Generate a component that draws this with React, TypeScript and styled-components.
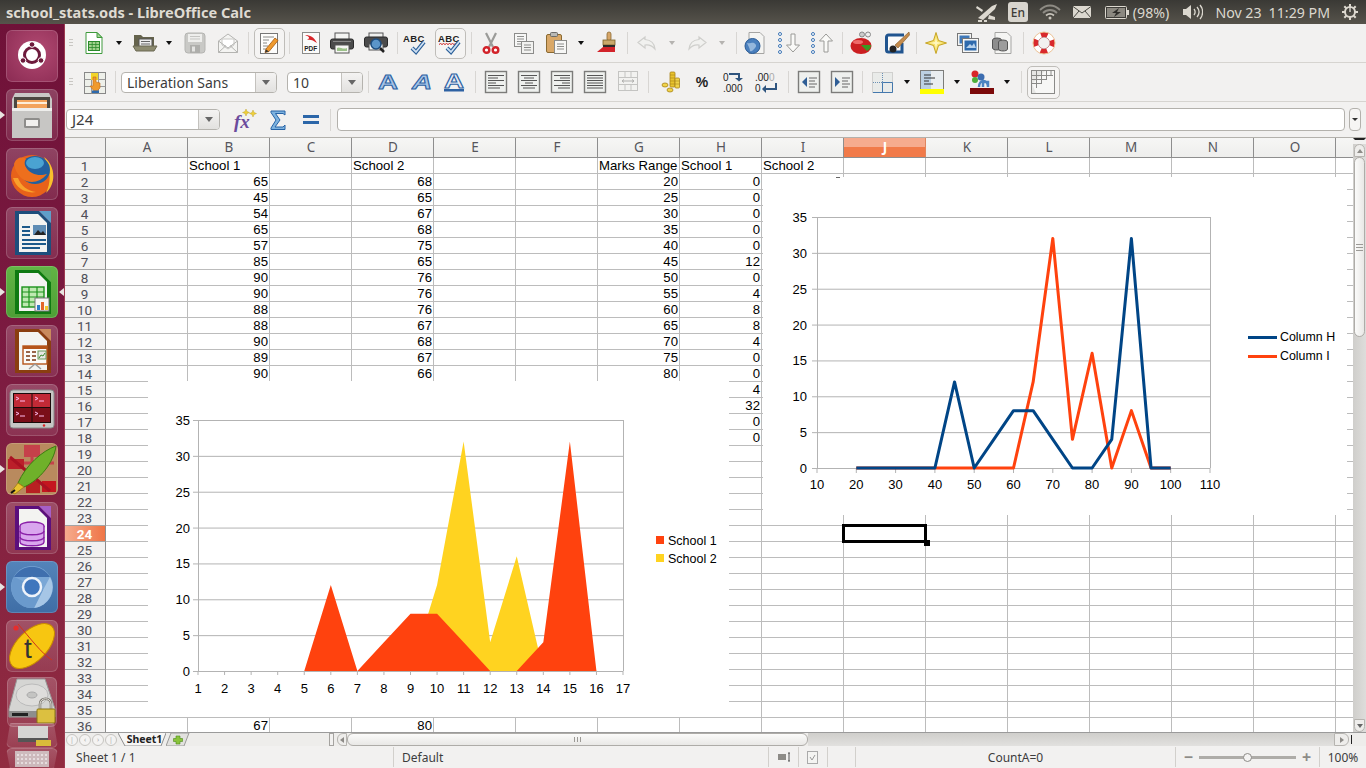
import React, { ReactNode } from "react";
import styled, { createGlobalStyle } from "styled-components";

const Global = createGlobalStyle`
  html, body { margin: 0; padding: 0; background: #f2f1f0; }
  * { box-sizing: border-box; }
`;

const UI = `"Noto Sans", "Open Sans", sans-serif`;
const CELL = `"Liberation Sans", Arial, sans-serif`;

const Page = styled.div`
  width: 1366px; height: 768px; overflow: hidden;
  display: flex; flex-direction: column; font-family: ${UI};
`;
const TopBar = styled.header`
  height: 24px; flex: none; display: flex; align-items: center;
  background: linear-gradient(#3a3935, #56534b); color: #dfdbd2;
`;
const Title = styled.div`
  font-weight: 700; font-size: 14.6px; margin-left: 6px; flex: 1; white-space: nowrap;
`;
const Tray = styled.div<{ $ml: number }>`
  margin-left: ${(p) => p.$ml}px; flex: none; display: flex; align-items: center;
  font-size: 14.2px; color: #dcd8cf; white-space: nowrap;
`;
const EnBox = styled.div`
  width: 20px; height: 20px; border-radius: 3px; background: #d8d5ce; color: #3c3b37;
  font-size: 12px; font-weight: 500; display: flex; align-items: center; justify-content: center;
`;
const Body = styled.div`
  flex: 1; min-height: 0; display: flex;
`;
const Launcher = styled.nav`
  width: 65px; flex: none; display: flex; flex-direction: column; align-items: center;
  padding: 6px 0 0 0; gap: 7px; overflow: hidden;
  background: linear-gradient(#6f1138, #7c1b41 45%, #912c40);
  border-right: 1px solid #9c3a50;
`;
const Tile = styled.div<{ $bg?: string; $h?: number; $w?: number; $mt?: number; $clip?: string }>`
  position: relative; flex: none; width: ${(p) => p.$w ?? 52}px; height: ${(p) => p.$h ?? 52}px;
  margin-top: ${(p) => p.$mt ?? 0}px;
  border-radius: 6px; display: flex; align-items: center; justify-content: center;
  background: ${(p) => p.$bg ?? "linear-gradient(rgba(255,255,255,.2), rgba(255,255,255,.09))"};
  box-shadow: inset 0 0 0 1px rgba(255,255,255,.16);
  ${(p) => (p.$clip ? `clip-path: ${p.$clip};` : "")}
`;
const Pip = styled.span<{ $side: "l" | "r" }>`
  position: absolute; top: 50%; margin-top: -4px; width: 0; height: 0;
  border-top: 4px solid transparent; border-bottom: 4px solid transparent;
  ${(p) =>
    p.$side === "l"
      ? "left: -6px; border-left: 5px solid #e8e4e0;"
      : "right: -6px; border-right: 5px solid #e8e4e0;"}
`;
const Main = styled.main`
  flex: 1; min-width: 0; display: flex; flex-direction: column; background: #f2f1f0;
`;
const Toolbar = styled.div<{ $h: number }>`
  height: ${(p) => p.$h}px; flex: none; display: flex; align-items: center;
  border-bottom: 1px solid #d6d4d0; background: #f2f1f0;
`;
const Slot = styled.div<{ $w: number; $ml: number; $on?: boolean }>`
  flex: none; width: ${(p) => p.$w}px; margin-left: ${(p) => p.$ml}px;
  display: flex; align-items: center; justify-content: center;
  ${(p) =>
    p.$on
      ? `height: ${p.$w}px; border: 1px solid #bfbdb9; border-radius: 5px; background: #f5f4f3;`
      : ""}
`;
const Sep = styled.div`
  width: 1px; height: 22px; background: #d8d6d3;
`;
const Grip = styled.div`
  width: 4px; height: 9px;
  background: repeating-linear-gradient(#c9c7c3 0 1px, transparent 1px 3px);
`;
const Arrow = styled.div`
  width: 0; height: 0; border-left: 3.5px solid transparent; border-right: 3.5px solid transparent;
  border-top: 4px solid #111;
`;
const ArrowOff = styled(Arrow)`
  border-top-color: #b5b3b0;
`;
const Combo = styled.div<{ $w: number; $h?: number }>`
  width: ${(p) => p.$w}px; height: ${(p) => p.$h ?? 21}px; flex: none; display: flex;
  background: #fff; border: 1px solid #b5b3ae; border-radius: 4px; overflow: hidden;
`;
const ComboText = styled.div<{ $size?: number }>`
  flex: 1; font-size: ${(p) => p.$size ?? 14}px; padding-left: 5px; color: #3c3c3c; line-height: 19px; white-space: nowrap;
`;
const ComboBtn = styled.div`
  width: 21px; flex: none; display: flex; align-items: center; justify-content: center;
  background: linear-gradient(#f4f3f2, #e2e1df); border-left: 1px solid #c4c2be;
`;
const GrayArrow = styled(Arrow)`
  border-left-width: 4px; border-right-width: 4px; border-top: 5px solid #666;
`;
const FormulaBar = styled.div`
  height: 35px; flex: none; display: flex; align-items: center; background: #f2f1f0;
`;
const FormulaInput = styled.div`
  width: 1008px; height: 23px; margin-left: 6px; flex: none; background: #fff;
  border: 1px solid #b3b1ac; border-radius: 4px;
`;
const FormulaDrop = styled.div`
  width: 12px; height: 23px; margin-left: 4px; flex: none; display: flex; align-items: center; justify-content: center;
  border: 1px solid #b3b1ac; border-radius: 4px; background: #f6f5f4;
`;
const SmallBlackArrow = styled(Arrow)`
  border-left-width: 3px; border-right-width: 3px; border-top-width: 3px; border-top-color: #333;
`;
const SheetArea = styled.div`
  flex: 1; min-height: 0; display: flex; border-top: 1px solid #b3b1ac;
`;
const Sheet = styled.div`
  flex: 1; min-width: 0; position: relative; overflow: hidden; background: #fff;
`;
const HeaderRow = styled.div`
  display: flex; height: 20px; border-bottom: 1px solid #8e8e8e;
  background: linear-gradient(#f6f6f5, #eeeeec);
`;
const Corner = styled.div`
  width: 41px; flex: none; border-right: 1px solid #8e8e8e; background: #f0efee;
`;
const ColHead = styled.div<{ $sel?: boolean; $w?: number }>`
  width: ${(p) => p.$w ?? 82}px; flex: none; text-align: center; font-size: 13.5px; line-height: 18px; padding-left: 1px;
  color: ${(p) => (p.$sel ? "#fff" : "#56565c")};
  font-weight: ${(p) => (p.$sel ? 700 : 400)};
  border-right: 1px solid ${(p) => (p.$sel ? "#e0855e" : "#8e8e8e")};
  ${(p) => (p.$sel ? "background: linear-gradient(#f6ab8e 0 50%, #f17a49 50%);" : "")}
  &:last-child { border-right: none; }
`;
const Row = styled.div`
  display: flex; height: 16px;
`;
const RowHead = styled.div<{ $sel?: boolean }>`
  width: 41px; flex: none; text-align: center; font-family: Roboto, sans-serif; font-size: 13.5px; line-height: 16px; padding-right: 1px;
  height: 16px;
  color: ${(p) => (p.$sel ? "#fff" : "#4f4f58")}; font-weight: ${(p) => (p.$sel ? 700 : 400)};
  background: ${(p) => (p.$sel ? "linear-gradient(90deg, #f6ab8e, #ef7546)" : "#f2f1f0")};
  border-right: 1px solid #8e8e8e; border-bottom: 1px solid #a4a4a4;
`;
const Cell = styled.div<{ $num?: boolean; $w?: number }>`
  width: ${(p) => p.$w ?? 82}px; flex: none; font-family: ${CELL}; font-size: 13.2px; line-height: 15px;
  color: #000; white-space: nowrap; overflow: visible;
  padding: 0 1px; text-align: ${(p) => (p.$num ? "right" : "left")};
  border-right: 1px solid #bcbcbc; border-bottom: 1px solid #bcbcbc;
  &:last-child { border-right: none; }
`;
const ChartBox = styled.div<{ $x: number; $y: number; $w: number; $h: number }>`
  position: absolute; left: ${(p) => p.$x}px; top: ${(p) => p.$y}px;
  width: ${(p) => p.$w}px; height: ${(p) => p.$h}px; background: #fff;
`;
const Selected = styled.div`
  position: absolute; left: 777px; top: 386px; width: 85px; height: 19px; border: 3px solid #000;
`;
const Handle = styled.div`
  position: absolute; right: -6px; bottom: -6px; width: 6px; height: 6px; background: #000;
`;
const VScroll = styled.div`
  width: 13px; flex: none; display: flex; flex-direction: column; align-items: center;
  background: linear-gradient(90deg, #cfcecb, #dedddb);
`;
const SplitDash = styled.div`
  width: 100%; height: 6px; background: #f2f1f0; border-top: 2px solid #222; border-left: 2px solid #f2f1f0; border-right: 2px solid #f2f1f0;
`;
const VBtn = styled.div<{ $down?: boolean }>`
  width: 11px; height: 13px; flex: none; display: flex; align-items: center; justify-content: center;
  background: #eeedeb; border: 1px solid #b6b4b0;
  border-radius: ${(p) => (p.$down ? "0 0 6px 6px" : "6px 6px 0 0")};
`;
const ThumbV = styled.div`
  width: 11px; height: 180px; flex: none; border: 1px solid #aeaca8; border-radius: 6px;
  background: linear-gradient(90deg, #fbfbfa, #e9e8e6);
  display: flex; align-items: center; justify-content: center;
`;
const GripV = styled.div`
  width: 7px; height: 7px; background: repeating-linear-gradient(#9c9a96 0 1px, transparent 1px 3px);
`;
const Spacer = styled.div`
  flex: 1;
`;
const TabBar = styled.div`
  height: 14px; flex: none; display: flex; align-items: center; background: #eeedeb; border-top: 1px solid #9b9b9b;
  position: relative;
`;
const NavBtn = styled.div`
  width: 12px; height: 12px; margin-left: 1px; border-radius: 50%; flex: none; border: 1px solid #c6c4c0; background: #f4f3f2;
  display: flex; align-items: center; justify-content: center; color: #aaa; font-size: 7px; line-height: 1;
`;
const TabShape = styled.div`
  position: relative; width: 48px; height: 13px; margin-left: 1px; flex: none;
`;
const TabLabel = styled.div`
  position: absolute; inset: 0 0 0 5px; text-align: center; font: 700 10.5px/12px ${UI}; color: #222;
`;
const Splitter = styled.div`
  width: 5px; height: 13px; margin-left: 139px; flex: none; border: 1px solid #a5a3a0; background: #f2f1f0;
`;
const HBtn = styled.div<{ $right?: boolean; $w: number; $ml?: number }>`
  width: ${(p) => p.$w}px; height: 13px; flex: none; display: flex; align-items: center; justify-content: center;
  margin-left: ${(p) => p.$ml ?? 0}px;
  background: #eeedeb; border: 1px solid #b6b4b0;
  border-radius: ${(p) => (p.$right ? "0 6px 6px 0" : "6px 0 0 6px")};
`;
const ThumbH = styled.div`
  width: 461px; height: 13px; flex: none; border: 1px solid #aeaca8; border-radius: 6px;
  background: linear-gradient(#fbfbfa, #e9e8e6); display: flex; align-items: center; justify-content: center;
`;
const GripH = styled.div`
  width: 7px; height: 5px; background: repeating-linear-gradient(90deg, #9c9a96 0 1px, transparent 1px 3px);
`;
const TrackH = styled.div`
  width: 526px; height: 13px; flex: none; background: linear-gradient(#cfcecb, #e2e1df);
`;
const EndTick = styled.div`
  width: 1px; height: 9px; margin-left: 2px; flex: none; background: #222;
`;
const TriL = styled.div`
  width: 0; height: 0; border-top: 3px solid transparent; border-bottom: 3px solid transparent; border-right: 4px solid #8d8b87;
`;
const TriR = styled(TriL)`
  border-right: none; border-left: 4px solid #8d8b87;
`;
const TriU = styled.div`
  width: 0; height: 0; border-left: 3px solid transparent; border-right: 3px solid transparent; border-bottom: 4px solid #8d8b87;
`;
const TriD = styled(TriU)`
  border-bottom: none; border-top: 4px solid #666;
`;
const StatusBar = styled.footer`
  height: 22px; flex: none; display: flex; align-items: center; background: #f2f1f0; color: #3c3c3c; font-size: 12px;
`;
const StatusCell = styled.div<{ $w: number; $center?: boolean; $first?: boolean }>`
  width: ${(p) => p.$w}px; height: 20px; flex: none; display: flex; align-items: center;
  justify-content: ${(p) => (p.$center ? "center" : "flex-start")};
  padding-left: ${(p) => (p.$center ? 0 : 8)}px;
  border-left: ${(p) => (p.$first ? "none" : "1px solid #d2d0cc")};
  gap: 3px;
`;
const ZoomTrack = styled.div`
  width: 97px; height: 3px; margin: 0 3px; background: #aeaca8; position: relative;
`;
const ZoomKnob = styled.div`
  position: absolute; left: 44px; top: -3px; width: 9px; height: 9px; border-radius: 50%; background: #f4f3f2; border: 1px solid #8d8b87;
`;
const ZoomSign = styled.span`
  font-size: 16px; color: #8d8b87; font-weight: 700; line-height: 1;
`;
const Svg = styled.svg`
  display: block; flex: none;
`;

/* ---------- icon helper ---------- */
const I = ({ w = 24, h = 24, children }: { w?: number; h?: number; children: ReactNode }) => (
  <Svg width={w} height={h} viewBox={`0 0 ${w} ${h}`}>
    {children}
  </Svg>
);

/* --- toolbar 1 --- */
const NewCalc = () => (
  <I>
    <path d="M4 1.5h11l5 5v16H4z" fill="#fff" stroke="#3f9a3c" />
    <path d="M15 1.5v5h5z" fill="#a8d79a" stroke="#3f9a3c" />
    <rect x="6.5" y="10.5" width="11" height="9" fill="#a4d38e" stroke="#2c8a2c" />
    <path d="M6.5 13.5h11M6.5 16.5h11M10.2 10.5v9M13.8 10.5v9" stroke="#2c8a2c" strokeWidth=".8" />
  </I>
);
const OpenIcon = () => (
  <I w={26}>
    <path d="M2 4h7l2 2h11v10H2z" fill="#65634c" />
    <rect x="7" y="8" width="13" height="8" fill="#eee" stroke="#555" />
    <path d="M9 10.500h9M9 13h9" stroke="#666" />
    <path d="M1 15h24l-3 5H4z" fill="#8d8b70" stroke="#6b6952" />
  </I>
);
const SaveIcon = () => (
  <I>
    <rect x="2" y="2" width="20" height="20" rx="3" fill="#c9c9c6" stroke="#b5b5b2" />
    <rect x="5" y="3" width="14" height="8" fill="#eeeeec" />
    <path d="M7 5.500h10M7 8h10" stroke="#c5c5c2" />
    <rect x="7" y="14" width="10" height="8" fill="#aeaeab" />
    <rect x="9" y="15.500" width="3" height="5" fill="#e4e4e2" />
  </I>
);
const MailOpen = () => (
  <I>
    <path d="M2.500 10 12 3l9.500 7v11.500h-19z" fill="#f4f4f2" stroke="#b4b4b1" />
    <path d="M6 8h12v6l-6 4-6-4z" fill="#fff" stroke="#c8c8c5" />
    <path d="M2.500 21.500 10 14.500M21.500 21.500 14 14.500M2.500 10 12 17l9.500-7" fill="none" stroke="#b4b4b1" />
  </I>
);
const EditDoc = () => (
  <I>
    <rect x="3.500" y="2.500" width="17" height="20" fill="#fdfdfc" stroke="#777" />
    <path d="M6 6h11M6 9h6M6 12h4M6 15h5M6 18h4" stroke="#8a8a88" />
    <path d="M9 18 18 7l3 2.500-9 11-4 1z" fill="#ef9a2e" stroke="#a8590c" strokeWidth=".8" />
    <path d="M8 21.500l1-3 3 2z" fill="#333" />
  </I>
);
const PdfIcon = () => (
  <I>
    <rect x="3.500" y="1.500" width="17" height="21" fill="#fbfbfa" stroke="#8b8b89" />
    <path d="M6 4c5 0 9 2 12 8-4-3-7-4-10-3 3-2 3-3-2-5z" fill="#d8252a" />
    <text x="5.200" y="20" fontFamily={CELL} fontSize="6.500" fontWeight="700" fill="#222">PDF</text>
  </I>
);
const PrintIcon = () => (
  <I w={26}>
    <rect x="6" y="2" width="14" height="8" fill="#f4f4f2" stroke="#555" />
    <rect x="1.500" y="8" width="23" height="10" rx="2" fill="#4b4b4b" stroke="#2a2a2a" />
    <path d="M4 10.500h18" stroke="#888" />
    <rect x="6" y="14" width="14" height="8" fill="#f6f6f4" stroke="#555" />
    <path d="M8 17c2-2 6 2 10 0v3H8z" fill="#9cc28a" />
  </I>
);
const PreviewIcon = () => (
  <I w={26}>
    <rect x="6" y="2" width="14" height="6" fill="#f0f0ee" stroke="#555" />
    <rect x="1.500" y="6" width="23" height="10" rx="2" fill="#4b4b4b" stroke="#2a2a2a" />
    <rect x="6" y="13" width="14" height="6" fill="#f6f6f4" stroke="#555" />
    <circle cx="13" cy="13" r="5" fill="#5b95c9" stroke="#1e4e80" strokeWidth="1.500" />
    <path d="M17 17l4 4" stroke="#222" strokeWidth="2.500" />
  </I>
);
const CheckMark = () => (
  <>
    <path d="M9 17l4 4 8-10" fill="none" stroke="#2a5f99" strokeWidth="4" />
    <path d="M9 17l4 4 8-10" fill="none" stroke="#cfe0f2" strokeWidth="1.800" />
  </>
);
const Spell = ({ wavy }: { wavy?: boolean }) => (
  <I w={24}>
    <text x="0" y="11" fontFamily={CELL} fontSize="9.500" fontWeight="700" letterSpacing=".4" fill="#222">ABC</text>
    {wavy && <path d="M1 13.500l1.500-1 1.500 1 1.500-1 1.500 1 1.500-1 1.500 1 1.500-1 1.500 1 1.500-1 1.500 1 1.500-1" fill="none" stroke="#c22" />}
    <CheckMark />
  </I>
);
const CutIcon = () => (
  <I>
    <path d="M7 2l7 14M17 2l-7 14" stroke="#9b9b98" strokeWidth="2.200" />
    <circle cx="7.500" cy="19" r="2.800" fill="#fff" stroke="#d2232a" strokeWidth="2.400" />
    <circle cx="16.500" cy="19" r="2.800" fill="#fff" stroke="#d2232a" strokeWidth="2.400" />
  </I>
);
const CopyIcon = () => (
  <I>
    <rect x="2.500" y="2.500" width="12" height="13" fill="#f7f7f6" stroke="#8c8c8a" />
    <path d="M5 5.500h7M5 8h7M5 10.500h7M5 13h5" stroke="#8c8c8a" />
    <rect x="9.500" y="10.500" width="12" height="12" fill="#f2f2f0" stroke="#8c8c8a" />
    <path d="M12 14h7M12 16.500h7M12 19h7" stroke="#8c8c8a" />
  </I>
);
const PasteIcon = () => (
  <I>
    <rect x="2.500" y="3.500" width="15" height="18" rx="1.500" fill="#d9a868" stroke="#8a6a32" />
    <rect x="6.500" y="1.500" width="7" height="4" rx="1" fill="#b9b9b6" stroke="#6c6c6a" />
    <rect x="10.500" y="9.500" width="12" height="13" fill="#f7f7f6" stroke="#8c8c8a" />
    <path d="M13 13h7M13 15.500h7M13 18h7" stroke="#8c8c8a" />
  </I>
);
const CloneBrush = () => (
  <I>
    <rect x="12" y="1" width="4" height="9" rx="2" fill="#d7a668" stroke="#8a6a32" strokeWidth=".8" />
    <rect x="8" y="9" width="12" height="5" fill="#c9a86b" stroke="#7c6028" strokeWidth=".8" />
    <path d="M8 14h12v4H8z" fill="#2a2a2a" />
    <path d="M8 16h12v5H2z" fill="#d2232a" />
  </I>
);
const UndoIcon = ({ flip }: { flip?: boolean }) => (
  <I w={22} h={20}>
    <g transform={flip ? "translate(22 0) scale(-1 1)" : undefined}>
      <path d="M9 4 2 9.500 9 15v-3c4-.500 7 .500 10 4-.500-5-4-9-10-9.500z" fill="#f1f1ef" stroke="#cfcfcc" strokeWidth="1.200" />
    </g>
  </I>
);
const HyperIcon = () => (
  <I>
    <path d="M6 1.500h11l4 4v17H6z" fill="#f5f5f3" stroke="#a5a5a3" />
    <circle cx="9.500" cy="15" r="7.500" fill="#4a7fbd" stroke="#2a5b95" />
    <path d="M4 12c3 1 5-1 7 0s3 3 1 5-3 4-5 3c0-3-2-5-3-8z" fill="#a7c5e3" opacity=".8" />
  </I>
);
const Dots = () => (
  <>
    <circle cx="3" cy="3" r="1.500" fill="#fff" stroke="#3d76b6" />
    <circle cx="3" cy="9" r="1.500" fill="#fff" stroke="#3d76b6" />
    <circle cx="3" cy="15" r="1.500" fill="#fff" stroke="#3d76b6" />
    <circle cx="3" cy="21" r="1.500" fill="#fff" stroke="#3d76b6" />
  </>
);
const SortIcon = ({ up }: { up?: boolean }) => (
  <I>
    <Dots />
    <path
      d={up ? "M16 3l6.500 7h-4.500v11h-4V10h-4.500z" : "M14 3h4v11h4.500L16 21l-6.500-7H14z"}
      fill="#fafaf8"
      stroke="#9a9a97"
    />
  </I>
);
const ChartIcon = () => (
  <I w={26}>
    <circle cx="19" cy="3.500" r="2.500" fill="#eee" stroke="#888" />
    <circle cx="13" cy="3.500" r="2.500" fill="#ccc" stroke="#888" />
    <ellipse cx="12" cy="15" rx="10.500" ry="8" fill="#cc1f22" />
    <path d="M12 14l10 0c0 3-2 5-4 6z" fill="#3a9a22" />
    <ellipse cx="9" cy="11" rx="5" ry="2" fill="#ef6a6a" />
  </I>
);
const DrawIcon = () => (
  <I w={26}>
    <path d="M20 4H4.500a2 2 0 0 0-2 2v13a2 2 0 0 0 2 2H18v-9" fill="#fbfbfa" stroke="#21558f" strokeWidth="3" />
    <path d="M25 1 11 14l3 3L25.500 4z" fill="#c68c4c" stroke="#7d5524" strokeWidth=".6" />
    <circle cx="9" cy="18" r="3.500" fill="#222" />
  </I>
);
const NavStar = () => (
  <I>
    <path d="M12 1.500 14.500 9.500 22.500 12 14.500 14.500 12 22.500 9.500 14.500 1.500 12 9.500 9.500z" fill="#f7e16b" stroke="#c6a423" />
    <path d="M12 6l1 5 5 1-5 1-1 5-1-5-5-1 5-1z" fill="#fff8c0" />
  </I>
);
const GalleryIcon = () => (
  <I>
    <rect x="1.500" y="2.500" width="14" height="12" fill="#f4f4f2" stroke="#777" />
    <rect x="3.500" y="4.500" width="10" height="8" fill="#3f78b8" />
    <rect x="6.500" y="7.500" width="16" height="14" fill="#f8f8f6" stroke="#777" />
    <rect x="8.500" y="9.500" width="12" height="10" fill="#2e6aad" />
    <path d="M10 17l4-4 2 2 2-3 2 5z" fill="#b6d1ec" />
  </I>
);
const DataIcon = () => (
  <I>
    <path d="M5 1.500h12l4 4v17H5z" fill="#f5f5f3" stroke="#a5a5a3" />
    <ellipse cx="7" cy="9" rx="4.500" ry="2" fill="#888" stroke="#555" />
    <path d="M2.500 9v8c0 2.600 9 2.600 9 0V9" fill="#8d8d8d" stroke="#555" />
    <ellipse cx="13" cy="11" rx="4.500" ry="2" fill="#999" stroke="#555" />
    <path d="M8.500 11v7c0 2.600 9 2.600 9 0v-7" fill="#9c9c9c" stroke="#555" />
  </I>
);
const HelpIcon = () => (
  <I w={24}>
    <circle cx="12" cy="12" r="8.500" fill="none" stroke="#fff" strokeWidth="5" />
    <circle cx="12" cy="12" r="8.500" fill="none" stroke="#d9292c" strokeWidth="5" strokeDasharray="6.700 6.650" strokeDashoffset="3.300" />
    <circle cx="12" cy="12" r="11" fill="none" stroke="#ecc295" strokeWidth="1" />
    <circle cx="12" cy="12" r="5.800" fill="#f2f1f0" stroke="#a55" strokeWidth=".6" />
  </I>
);

/* --- toolbar 2 --- */
const ThemesIcon = () => (
  <I>
    <rect x="1.500" y="2.500" width="21" height="21" fill="#eef0ea" stroke="#888" />
    <path d="M8.500 2.500v21M15.500 2.500v21M1.500 9.500h21M1.500 16.500h21" stroke="#999" />
    <rect x="8" y="3" width="7" height="7" fill="#f2d52a" />
    <path d="M10 7h3v5l4 1v5l-3 3h-3l-4-5 3 0z" fill="#f09a2e" stroke="#c4681a" strokeWidth=".6" />
    <rect x="9" y="20.500" width="7" height="2.500" fill="#2e6aad" />
  </I>
);
const LetterA = ({ italic, under }: { italic?: boolean; under?: boolean }) => (
  <I w={22} h={24}>
    <text
      x="1" y={under ? 17.500 : 19} fontFamily={CELL} fontSize="20" fontWeight="700" textLength={20} lengthAdjust="spacingAndGlyphs"
      fontStyle={italic ? "italic" : "normal"} fill={under ? "#e6edf6" : "#a6c4e6"} stroke="#2e62a3" strokeWidth=".9"
    >A</text>
    {under && <rect x="1" y="19" width="20" height="2.500" fill="#2e62a3" />}
  </I>
);
const Align = ({ lines }: { lines: [number, number][] }) => (
  <I>
    <rect x="1.500" y="1.500" width="21" height="21" fill="#eef0ee" stroke="#7c7c7a" strokeWidth="1.400" />
    {lines.map(([x, w], i) => (
      <rect key={i} x={x} y={5 + i * 2.5} width={w} height="1" fill="#555" />
    ))}
  </I>
);
const L = [[4, 16], [4, 10], [4, 16], [4, 8], [4, 16], [4, 12]] as [number, number][];
const C = [[4, 16], [7, 10], [4, 16], [8, 8], [4, 16], [6, 12]] as [number, number][];
const R = [[4, 16], [10, 10], [4, 16], [12, 8], [4, 16], [8, 12]] as [number, number][];
const J = [[4, 16], [4, 16], [4, 16], [4, 16], [4, 16], [4, 16]] as [number, number][];
const MergeIcon = () => (
  <I>
    <rect x="2.500" y="1.500" width="19" height="19" fill="#f2f2f0" stroke="#c4c4c2" />
    <path d="M2.500 7.500h19M2.500 14.500h19M9 1.500v6M15 1.500v6M9 14.500v6M15 14.500v6" stroke="#c4c4c2" />
    <path d="M6 11h12M6 11l2-1.500M6 11l2 1.500M18 11l-2-1.500M18 11l-2 1.500" stroke="#b0b0ae" fill="none" />
  </I>
);
const CoinsIcon = () => (
  <I>
    <rect x="13" y="2" width="5" height="15" rx="1" fill="#e9c42e" stroke="#a8841a" strokeWidth=".8" />
    <rect x="18" y="8" width="4.500" height="10" rx="1" fill="#f0d34a" stroke="#a8841a" strokeWidth=".8" />
    <path d="M13 5h5M13 8h5M13 11h5M13 14h5M18 11h4.500M18 14h4.500" stroke="#a8841a" strokeWidth=".6" />
    <ellipse cx="8" cy="15" rx="3" ry="2" fill="#f0d34a" stroke="#a8841a" strokeWidth=".8" />
    <ellipse cx="13" cy="20" rx="3" ry="2" fill="#f0d34a" stroke="#a8841a" strokeWidth=".8" />
  </I>
);
const PercentLabel = () => (
  <I>
    <text x="12" y="17" textAnchor="middle" fontFamily={CELL} fontSize="14" fontWeight="700" fill="#1e1e1e">%</text>
  </I>
);
const DecAdd = () => (
  <I w={26}>
    <text x="1" y="11" fontFamily={CELL} fontSize="10" fill="#222">0</text>
    <text x="1" y="22" fontFamily={CELL} fontSize="10" fill="#222">.000</text>
    <path d="M7 4h10v5" fill="none" stroke="#2f557f" strokeWidth="2" />
    <path d="M13 8h8l-4 3.500z" fill="#2f557f" />
  </I>
);
const DecDel = () => (
  <I w={26}>
    <text x="1" y="11" fontFamily={CELL} fontSize="10" fill="#222">.00<tspan fill="#aaa">0</tspan></text>
    <text x="1" y="22" fontFamily={CELL} fontSize="10" fill="#222">0</text>
    <path d="M22 13v6H10" fill="none" stroke="#2f557f" strokeWidth="2" />
    <path d="M12 15v8l-4-4z" fill="#2f557f" />
  </I>
);
const Indent = ({ more }: { more?: boolean }) => (
  <I>
    <rect x="1.500" y="1.500" width="21" height="21" fill="#eef0ee" stroke="#7c7c7a" strokeWidth="1.400" />
    {more ? <path d="M5 7v10l5-5z" fill="#2e5e96" /> : <path d="M10 7v10l-5-5z" fill="#2e5e96" />}
    <path d="M12 8h8M12 11h6M12 14h8M12 17h6" stroke="#666" />
  </I>
);
const BorderIcon = () => (
  <I>
    <rect x="2.500" y="2.500" width="20" height="20" fill="#e9ebe9" stroke="#d0d0ce" />
    <path d="M3 12.500h9.500M12.500 3v9" stroke="#6a8fb3" strokeDasharray="1 1" />
    <path d="M12.500 12.500v10M22.500 12.500h-10M22.500 12.500v10H3" fill="none" stroke="#4478ad" />
  </I>
);
const BgColor = () => (
  <I w={24}>
    <rect x=".500" y=".500" width="23" height="19" fill="#e9edf0" stroke="#7c7c7a" />
    <rect x="1" y="1" width="10" height="18" fill="#bcd0e2" />
    <path d="M4 5h7M4 8h11M4 11h5M4 14h9" stroke="#333" />
    <rect x="0" y="19" width="24" height="5" fill="#ffff00" />
  </I>
);
const FontColor = () => (
  <I>
    <circle cx="5" cy="4" r="3.500" fill="#d8262a" />
    <circle cx="5" cy="10" r="3" fill="#4fb03a" />
    <circle cx="11" cy="7" r="3.500" fill="#3d6db0" />
    <path d="M9 17c0-8 9-8 9 0M13 17v-5h5v5" fill="none" stroke="#4d84c2" strokeWidth="2.500" />
    <rect x="0" y="18" width="24" height="6" fill="#7c0a0a" />
  </I>
);
const GridToggle = () => (
  <I>
    <rect x=".500" y=".500" width="23" height="23" fill="#e6e6e4" stroke="#8a8a88" />
    <path d="M1 14 14 1h9v22H5z" fill="#f7f7f6" />
    <path d="M1 5.500h21M1 9.500h14M1 13.500h9M5.500 1v17M10.500 1v13M15.500 1v9M20 1v5" stroke="#8a8a88" />
  </I>
);
const FxIcon = () => (
  <I w={26}>
    <text x="2" y="20" fontFamily={`"Liberation Serif", serif`} fontSize="19" fontWeight="700" fontStyle="italic" fill="#6b4b9c">fx</text>
    <path d="M14 1l1 2.500 2.500 1-2.500 1-1 2.500-1-2.500-2.500-1 2.500-1zM21 2l1 2.500 2.500 1-2.500 1-1 2.500-1-2.500-2.500-1 2.500-1z" fill="#f0cf3a" stroke="#b39a1c" strokeWidth=".4" />
  </I>
);
const SumIcon = () => (
  <I w={18} h={22}>
    <path d="M2 2h14v4l-2-1.500H6.500L11 11l-5 7h8l2-2v4.500H2v-1.500L7 11 2 3.500z" fill="#7eb3df" stroke="#2663a6" />
  </I>
);
const EqIcon = () => (
  <I w={18} h={16}>
    <rect x="1" y="3" width="16" height="3" fill="#2c66a8" />
    <rect x="1" y="9" width="16" height="3" fill="#2c66a8" />
  </I>
);

type It = [number, number, ReactNode, boolean?];
const Bar = ({ items }: { items: It[] }) => {
  let right = 65;
  return (
    <>
      {items.map(([c, w, node, on], i) => {
        const left = c - w / 2;
        const ml = left - right;
        right = left + w;
        return (
          <Slot key={i} $w={w} $ml={ml} $on={on}>
            {node}
          </Slot>
        );
      })}
    </>
  );
};

const ar: ReactNode = <Arrow />;
const aro: ReactNode = <ArrowOff />;
const sp: ReactNode = <Sep />;

const row1: It[] = [
  [70.5, 5, <Grip />], [94, 24, <NewCalc />], [119, 8, ar], [145, 26, <OpenIcon />], [169, 8, ar],
  [195, 24, <SaveIcon />], [228, 24, <MailOpen />], [248, 1, sp], [269, 31, <EditDoc />, true], [289, 1, sp],
  [311, 24, <PdfIcon />], [342, 26, <PrintIcon />], [376, 26, <PreviewIcon />], [397, 1, sp],
  [415, 24, <Spell />], [450, 31, <Spell wavy />, true], [471, 1, sp], [491, 24, <CutIcon />], [524, 24, <CopyIcon />],
  [556, 24, <PasteIcon />], [581, 8, ar], [607, 24, <CloneBrush />], [627, 1, sp], [647, 22, <UndoIcon />], [672, 8, aro],
  [697, 22, <UndoIcon flip />], [722, 8, aro], [736, 1, sp], [755, 24, <HyperIcon />], [789, 24, <SortIcon />],
  [822, 24, <SortIcon up />], [842, 1, sp], [862, 26, <ChartIcon />], [897, 26, <DrawIcon />], [916, 1, sp],
  [936, 24, <NavStar />], [968, 24, <GalleryIcon />], [1002, 24, <DataIcon />], [1023, 1, sp], [1044, 24, <HelpIcon />],
];
const Font = (
  <Combo $w={156}>
    <ComboText>Liberation Sans</ComboText>
    <ComboBtn><GrayArrow /></ComboBtn>
  </Combo>
);
const Size = (
  <Combo $w={76}>
    <ComboText>10</ComboText>
    <ComboBtn><GrayArrow /></ComboBtn>
  </Combo>
);
const row2: It[] = [
  [70.5, 5, <Grip />], [95, 24, <ThemesIcon />], [115, 1, sp], [199, 156, Font], [325, 76, Size], [368, 1, sp],
  [388, 22, <LetterA />], [422, 22, <LetterA italic />], [454, 22, <LetterA under />], [475, 1, sp],
  [496, 24, <Align lines={L} />], [529, 24, <Align lines={C} />], [562, 24, <Align lines={R} />], [595, 24, <Align lines={J} />],
  [628, 24, <MergeIcon />], [648, 1, sp], [669, 24, <CoinsIcon />], [702, 24, <PercentLabel />], [735, 26, <DecAdd />],
  [767, 26, <DecDel />], [788, 1, sp], [809, 24, <Indent />], [842, 24, <Indent more />], [862, 1, sp],
  [882, 24, <BorderIcon />], [907, 8, ar], [932, 24, <BgColor />], [957, 8, ar], [982, 24, <FontColor />], [1007, 8, ar],
  [1021, 1, sp], [1043, 33, <GridToggle />, true],
];

/* --- launcher icons --- */
const Lnch = ({ children }: { children: ReactNode }) => <I w={46} h={46}>{children}</I>;
const UbuntuIcon = () => (
  <Lnch>
    <circle cx="23" cy="22" r="14" fill="#fff" />
    <circle cx="23" cy="22" r="7.500" fill="none" stroke="#6d1a3c" strokeWidth="3" />
    <circle cx="23" cy="11.500" r="2.800" fill="#6d1a3c" stroke="#fff" />
    <circle cx="14" cy="27.500" r="2.800" fill="#6d1a3c" stroke="#fff" />
    <circle cx="32" cy="27.500" r="2.800" fill="#6d1a3c" stroke="#fff" />
  </Lnch>
);
const FilesIcon = () => (
  <I w={46} h={48}>
    <path d="M6 2h34l3 6v38H3V8z" fill="#c9c8c6" />
    <rect x="5" y="6" width="36" height="11" fill="#4b4741" />
    <rect x="8" y="9" width="30" height="8" fill="#f3a35c" />
    <path d="M8 12h30" stroke="#fdeed9" strokeWidth="2" />
    <rect x="3" y="17" width="40" height="30" fill="#c7c6c4" />
    <rect x="3" y="17" width="40" height="3" fill="#eeeeec" />
    <rect x="15" y="27" width="16" height="10" rx="1.500" fill="#8e8d8b" />
    <rect x="17" y="29" width="12" height="6" fill="#f1f0ee" />
  </I>
);
const FirefoxIcon = () => (
  <I w={48} h={48}>
    <circle cx="24" cy="26" r="21" fill="#e8621a" />
    <path d="M36 7c11 8 13 26 2 36 6-12 4-26-2-36z" fill="#f9c02c" />
    <ellipse cx="27" cy="20" rx="15" ry="14" fill="#23609f" />
    <ellipse cx="27" cy="13" rx="9" ry="6" fill="#4aa3d2" />
    <path d="M6 14c3-8 9-7 12-5-3 4-1 10 6 14 6 3 11 2 15 1-6 8-16 10-23 6C10 26 7 20 6 14z" fill="#ee6f1d" />
    <path d="M5 28c3 10 13 16 23 14-8-1-15-6-18-14z" fill="#f9a12c" />
  </I>
);
const OfficeDoc = ({ edge, fold, children }: { edge: string; fold: string; children: ReactNode }) => (
  <Lnch>
    <path d="M6 1h24l12 12v32H6z" fill={edge} />
    <path d="M10 4h19l9 9v29H10z" fill="#f3f3f1" />
    <path d="M30 1l12 12V1z" fill={fold} />
    {children}
  </Lnch>
);
const WriterIcon = () => (
  <OfficeDoc edge="#1d4e7c" fold="#5f9ec9">
    <path d="M13 17h8M13 21h8M13 25h8M13 30h24M13 34h24M13 38h18" stroke="#1d5a8a" strokeWidth="2" />
    <rect x="24" y="15" width="13" height="10" fill="#5f8db5" />
    <path d="M25 25l4-5 3 3 2-2 3 4z" fill="#222" />
  </OfficeDoc>
);
const CalcIcon = () => (
  <OfficeDoc edge="#0f7a12" fold="#5cb04c">
    <rect x="13" y="18" width="22" height="20" fill="#bfe9b2" stroke="#1b921b" strokeWidth="1.400" />
    <path d="M13 23h22M13 28h22M13 33h22M20 18v20M28 18v20" stroke="#1b921b" strokeWidth="1.200" />
    <rect x="26" y="29" width="14" height="13" fill="#f6f6f4" stroke="#777" />
    <rect x="28" y="36" width="3" height="5" fill="#2d7ec7" />
    <rect x="32" y="33" width="3" height="8" fill="#e2662a" />
    <rect x="36" y="37" width="3" height="4" fill="#f0c72e" />
  </OfficeDoc>
);
const ImpressIcon = () => (
  <OfficeDoc edge="#8a3e10" fold="#c98a5c">
    <rect x="14" y="18" width="24" height="18" fill="#fbfbf9" stroke="#b6541a" strokeWidth="1.400" />
    <rect x="14" y="18" width="24" height="3" fill="#b6541a" />
    <path d="M17 24h4M17 28h4M17 32h4M23 24h4M23 28h4M23 32h4" stroke="#7a3610" strokeWidth="1.500" />
    <rect x="29" y="23" width="8" height="8" fill="#e8e8e6" stroke="#6a9a5a" />
    <path d="M30 30l2-3 2 1 2-3" stroke="#3a8a2a" fill="none" />
    <path d="M26 36l-6 5M26 36l6 5" stroke="#999" strokeWidth="1.500" />
  </OfficeDoc>
);
const WorkspaceIcon = () => (
  <Lnch>
    <rect x="1" y="3" width="44" height="38" rx="3" fill="#c6c6c4" stroke="#888" />
    <rect x="4" y="6" width="38" height="30" fill="#1a0a0a" />
    <rect x="5" y="7" width="17.500" height="13" fill="#c12a36" />
    <rect x="23.500" y="7" width="17.500" height="13" fill="#c12a36" />
    <rect x="5" y="21" width="17.500" height="14" fill="#7a0e18" />
    <rect x="23.500" y="21" width="17.500" height="14" fill="#7a0e18" />
    <path d="M7 10l3 1.500L7 13M26 10l3 1.500-3 1.500M7 25l3 1.500L7 28M26 25l3 1.500-3 1.500" stroke="#fbe" fill="none" />
    <path d="M11 14h5M30 14h5M11 29h5M30 29h5" stroke="#fbe" />
    <circle cx="35" cy="38.500" r="1.200" fill="#d22" />
  </Lnch>
);
const DiaIcon = () => (
  <I w={52} h={52}>
    <rect x="18" y="2" width="16" height="12" fill="#c6414a" />
    <path d="M26 14v22M6 20h42" stroke="#c6414a" strokeWidth="3" />
    <rect x="2" y="16" width="16" height="10" fill="#bb1f2a" />
    <rect x="36" y="38" width="14" height="11" fill="#c4161f" />
    <rect x="20" y="38" width="14" height="12" fill="#b8141c" opacity=".9" />
    <path d="M4 14 44 48" stroke="#a12" strokeWidth="3" />
    <path d="M12 40C20 22 36 8 50 3c-2 16-16 34-32 41z" fill="#6fb12a" stroke="#3d7a12" />
    <path d="M12 40l6 4-9 7-4-2z" fill="#e8c22e" stroke="#a8841a" />
    <path d="M5 50l4-3" stroke="#111" strokeWidth="2" />
  </I>
);
const BaseIcon = () => (
  <OfficeDoc edge="#5b0f7c" fold="#a65fc7">
    <ellipse cx="23" cy="21" rx="12" ry="4" fill="#d9a6ee" stroke="#8a1fa8" strokeWidth="1.400" />
    <path d="M11 21v16c0 5 24 5 24 0V21" fill="#d9a6ee" stroke="#8a1fa8" strokeWidth="1.400" />
    <path d="M11 26c0 5 24 5 24 0M11 32c0 5 24 5 24 0" fill="none" stroke="#8a1fa8" strokeWidth="1.400" />
  </OfficeDoc>
);
const ChromiumIcon = () => (
  <I w={46} h={46}>
    <circle cx="23" cy="23" r="21" fill="#7aa7d6" />
    <path d="M5 13A21 21 0 0 1 41 13H23z" fill="#3f6fae" />
    <path d="M41 13A21 21 0 0 1 25 44l9-18z" fill="#a6c6e6" />
    <path d="M5 13a21 21 0 0 0 20 31l9-18z" fill="#6a9acd" />
    <circle cx="23" cy="23" r="9" fill="#3f76bd" stroke="#eef3fa" strokeWidth="2.500" />
  </I>
);
const TexIcon = () => (
  <I w={52} h={52}>
    <ellipse cx="26" cy="26" rx="28" ry="15" transform="rotate(-45 26 26)" fill="#f7c611" stroke="#c88a00" />
    <path d="M12 4c12 14 24 30 34 36" stroke="#d0321c" fill="none" />
    <circle cx="10" cy="8" r="2.600" fill="#e62d2d" />
    <text x="18" y="38" fontFamily={CELL} fontSize="28" fill="#333">t</text>
  </I>
);
const HddIcon = () => (
  <I w={50} h={50}>
    <path d="M10 2h28l10 30v8H2v-8z" fill="#d5d5d3" stroke="#999" />
    <ellipse cx="25" cy="18" rx="16" ry="11" fill="#dedddb" stroke="#bbb" />
    <ellipse cx="25" cy="18" rx="5" ry="3" fill="#c4c4c2" stroke="#aaa" />
    <path d="M2 34h46v6H2z" fill="#8e8e8c" />
    <rect x="5" y="36" width="16" height="3" fill="#222" />
    <path d="M33 33v-6c0-7 11-7 11 0v6" fill="none" stroke="#77736a" strokeWidth="2.500" />
    <path d="M33 33v-6c0-7 11-7 11 0v6" fill="none" stroke="#e4e2dd" strokeWidth="1" />
    <rect x="30" y="32" width="18" height="14" rx="1" fill="#dcc040" stroke="#8a7512" />
  </I>
);

/* --- tray --- */
const TrayPen = () => (
  <I w={24} h={20}>
    <path d="M3 16 17 4l5-2-2 5-12 11z" fill="#dcd8cf" />
    <path d="M2 4l6 4-1 2-6-4zM14 13l6 2v3l-7-1zM3 18h4v2H3zM9 18h3v2H9z" fill="#dcd8cf" />
  </I>
);
const WifiIcon = () => (
  <I w={22} h={16}>
    <path d="M1 6c6-6 14-6 20 0M4 9c4-4 10-4 14 0" fill="none" stroke="#8e8b84" strokeWidth="1.800" />
    <path d="M7 11.500c2.500-2 5.500-2 8 0" fill="none" stroke="#c9c5bc" strokeWidth="1.800" />
    <circle cx="11" cy="14" r="1.500" fill="#c9c5bc" />
  </I>
);
const MailIcon = () => (
  <I w={18} h={12}>
    <rect x="0" y="0" width="18" height="12" fill="#dcd8cf" />
    <path d="M0 .500 9 7l9-6.500M0 12l6-7M18 12l-6-7" stroke="#4a4842" fill="none" />
  </I>
);
const BatteryIcon = () => (
  <I w={24} h={13}>
    <rect x=".500" y=".500" width="21" height="12" rx="1" fill="#3d3c38" stroke="#dcd8cf" />
    <rect x="2" y="2" width="18" height="9" fill="#8b8880" />
    <rect x="22" y="4" width="2" height="5" fill="#dcd8cf" />
    <path d="M14 2 7 7h4l-2 4 7-5h-4z" fill="#2f2e2b" />
  </I>
);
const SpeakerIcon = () => (
  <I w={20} h={16}>
    <path d="M0 5h3l5-4v14l-5-4H0z" fill="#dcd8cf" />
    <path d="M11 5c1.500 2 1.500 4 0 6M14 3c2.500 3 2.500 7 0 10M17 1c3.500 4 3.500 10 0 14" fill="none" stroke="#dcd8cf" strokeWidth="1.300" />
  </I>
);
const GearIcon = () => (
  <I w={16} h={16}>
    <circle cx="8" cy="8" r="5" fill="none" stroke="#dcd8cf" strokeWidth="2" />
    <path d="M8 0v3M8 13v3M0 8h3M13 8h3M2.300 2.300l2 2M11.700 11.700l2 2M2.300 13.700l2-2M11.700 4.300l2-2" stroke="#dcd8cf" strokeWidth="2" />
    <path d="M8 4v4" stroke="#3c3b37" strokeWidth="3" />
    <path d="M8 3v5" stroke="#dcd8cf" strokeWidth="1.400" />
  </I>
);

/* --- sheet data --- */
const cols = "ABCDEFGHIJKLMNOP".split("");
const B = [65, 45, 54, 65, 57, 85, 90, 90, 88, 88, 90, 89, 90];
const D = [68, 65, 67, 68, 75, 65, 76, 76, 76, 67, 68, 67, 66];
const Hv = [0, 0, 0, 0, 0, 12, 0, 4, 8, 8, 4, 0, 0, 4, 32, 0, 0];
const Iv = [0, 0, 0, 0, 0, 0, 0, 0, 0, 12, 32, 4, 16, 0, 8, 0, 0];

const cellValue = (c: string, r: number): { t: string; num?: boolean } | null => {
  if (r === 1) {
    const m: Record<string, string> = { B: "School 1", D: "School 2", G: "Marks Range", H: "School 1", I: "School 2" };
    return m[c] ? { t: m[c] } : null;
  }
  if (r === 36) {
    if (c === "B") return { t: "67", num: true };
    if (c === "D") return { t: "80", num: true };
    return null;
  }
  const i = r - 2;
  if (c === "B" && i < B.length) return { t: String(B[i]), num: true };
  if (c === "D" && i < D.length) return { t: String(D[i]), num: true };
  if (c === "G" && i < 13) return { t: String(20 + i * 5), num: true };
  if (c === "H" && i < 17) return { t: String(Hv[i]), num: true };
  return null;
};

const CT = ({ x, y, a = "middle", size = 13, children }: { x: number; y: number; a?: "start" | "middle" | "end"; size?: number; children: ReactNode }) => (
  <text x={x} y={y} textAnchor={a} fontFamily={CELL} fontSize={size} fill="#000">{children}</text>
);

const LineChart = () => {
  const x0 = 817, x1 = 1210, y0 = 468, y1 = 217;
  const X = (v: number) => x0 + ((v - 10) / 100) * (x1 - x0);
  const Y = (v: number) => y0 - (v / 35) * (y0 - y1);
  const pts = (a: number[]) => a.map((v, i) => `${X(20 + i * 5)},${Y(v)}`).join(" ");
  const xt = Array.from({ length: 11 }, (_, i) => 10 + i * 10);
  const yt = Array.from({ length: 8 }, (_, i) => i * 5);
  return (
    <Svg width="584" height="338" viewBox="763 177 584 338">
      {yt.map((v) => (
        <g key={v}>
          <path d={`M${x0 - 5} ${Y(v) + 0.5}H${x1}`} stroke="#b3b3b3" />
          <CT x={x0 - 10} y={Y(v) + 5} a="end">{v}</CT>
        </g>
      ))}
      {xt.map((v) => (
        <g key={v}>
          <path d={`M${X(v)} ${y0}v5`} stroke="#b3b3b3" />
          <CT x={X(v)} y={y0 + 21}>{v}</CT>
        </g>
      ))}
      <path d={`M${x0 + 0.5} ${y1}V${y0}M${x1 + 0.5} ${y1}V${y0}`} stroke="#b3b3b3" />
      <polyline points={pts(Iv)} fill="none" stroke="#ff420e" strokeWidth="3" strokeLinejoin="round" />
      <polyline points={pts(Hv)} fill="none" stroke="#004586" strokeWidth="3" strokeLinejoin="round" />
      <rect x="1248" y="336" width="29" height="3" fill="#004586" />
      <CT x={1280} y={341} a="start" size={12.4}>Column H</CT>
      <rect x="1248" y="355" width="29" height="3" fill="#ff420e" />
      <CT x={1280} y={360} a="start" size={12.4}>Column I</CT>
      <rect x="836" y="177" width="4" height="1" fill="#666" />
    </Svg>
  );
};

const AreaChart = () => {
  const x0 = 198, x1 = 623, y0 = 671, y1 = 420;
  const X = (v: number) => x0 + ((v - 1) / 16) * (x1 - x0);
  const Y = (v: number) => y0 - (v / 35) * (y0 - y1);
  const area = (a: number[]) => `${X(1)},${y0} ` + a.map((v, i) => `${X(i + 1)},${Y(v)}`).join(" ") + ` ${X(17)},${y0}`;
  const xt = Array.from({ length: 17 }, (_, i) => i + 1);
  const yt = Array.from({ length: 8 }, (_, i) => i * 5);
  return (
    <Svg width="581" height="336" viewBox="148 381 581 336">
      {yt.map((v) => (
        <g key={v}>
          <path d={`M${x0 - 5} ${Y(v) + 0.5}H${x1}`} stroke="#b3b3b3" />
          <CT x={x0 - 8} y={Y(v) + 5} a="end">{v}</CT>
        </g>
      ))}
      <path d={`M${x0 + 0.5} ${y1}V${y0}M${x1 + 0.5} ${y1}V${y0}`} stroke="#b3b3b3" />
      {xt.map((v) => (
        <g key={v}>
          <path d={`M${X(v)} ${y0}v4`} stroke="#b3b3b3" />
          <CT x={X(v)} y={y0 + 22}>{v}</CT>
        </g>
      ))}
      <polygon points={area(Iv)} fill="#ffd320" />
      <polygon points={area(Hv)} fill="#ff420e" />
      <rect x="656" y="536" width="8" height="8" fill="#ff420e" />
      <CT x={668} y={545} a="start" size={12.5}>School 1</CT>
      <rect x="656" y="554" width="8" height="8" fill="#ffd320" />
      <CT x={668} y={563} a="start" size={12.5}>School 2</CT>
    </Svg>
  );
};

export default function App() {
  const rows = Array.from({ length: 36 }, (_, i) => i + 1);
  return (
    <Page>
      <Global />
      <TopBar>
        <Title>school_stats.ods - LibreOffice Calc</Title>
        <Tray $ml={0}><TrayPen /></Tray>
        <Tray $ml={9}><EnBox>En</EnBox></Tray>
        <Tray $ml={11}><WifiIcon /></Tray>
        <Tray $ml={12}><MailIcon /></Tray>
        <Tray $ml={14}><BatteryIcon /></Tray>
        <Tray $ml={4}>(98%)</Tray>
        <Tray $ml={14}><SpeakerIcon /></Tray>
        <Tray $ml={12}>Nov 23</Tray>
        <Tray $ml={7}>11:29 PM</Tray>
        <Tray $ml={12}><GearIcon /></Tray>
        <Tray $ml={8}><span /></Tray>
      </TopBar>
      <Body>
        <Launcher>
          <Tile $bg="radial-gradient(circle at 60% 40%, #b24a72, #8a2a52)"><UbuntuIcon /></Tile>
          <Tile><Pip $side="l" /><FilesIcon /></Tile>
          <Tile><FirefoxIcon /></Tile>
          <Tile><WriterIcon /></Tile>
          <Tile $bg="linear-gradient(#62b545, #4e9e36)"><Pip $side="l" /><Pip $side="r" /><CalcIcon /></Tile>
          <Tile><ImpressIcon /></Tile>
          <Tile><WorkspaceIcon /></Tile>
          <Tile $bg="#b98a5e"><Pip $side="l" /><DiaIcon /></Tile>
          <Tile><BaseIcon /></Tile>
          <Tile $bg="linear-gradient(#5484ba, #3f6ea6)"><Pip $side="l" /><ChromiumIcon /></Tile>
          <Tile><TexIcon /></Tile>
          <Tile $h={50} $w={50} $mt={-2}><HddIcon /></Tile>
          <Tile $h={25} $w={52} $mt={-11} $clip="polygon(8% 0, 92% 0, 100% 100%, 0 100%)"><I w={44} h={24}><rect x="8" y="2" width="30" height="14" fill="#d5d5d3" /><rect x="8" y="14" width="30" height="4" fill="#555" /><rect x="26" y="16" width="15" height="6" fill="#d9bc3a" /></I></Tile>
          <Tile $h={21} $w={52} $mt={-7} $clip="polygon(0 0, 100% 0, 92% 100%, 8% 100%)"><I w={34} h={18}><rect x="0" y="1" width="34" height="16" fill="#d8d6d4" opacity=".8" /><path d="M2 5h30M2 9h30M2 13h30" stroke="#fff" strokeDasharray="2 2" /></I></Tile>
        </Launcher>
        <Main>
          <Toolbar $h={39}><Bar items={row1} /></Toolbar>
          <Toolbar $h={39}><Bar items={row2} /></Toolbar>
          <FormulaBar>
            <Bar items={[[143, 154, <Combo $w={154} $h={21}><ComboText $size={15}>J24</ComboText><ComboBtn><GrayArrow /></ComboBtn></Combo>]]} />
            <Bar items={[[245 - 155, 26, <FxIcon />], [278 - 155, 18, <SumIcon />], [311 - 155, 18, <EqIcon />], [330 - 155, 1, sp]]} />
            <FormulaInput />
            <FormulaDrop><SmallBlackArrow /></FormulaDrop>
          </FormulaBar>
          <SheetArea>
            <Sheet>
              <HeaderRow>
                <Corner />
                {cols.map((c, i) => (
                  <ColHead key={c} $sel={c === "J"} $w={i === 15 ? 17 : 82}>{c === "P" ? "" : c}</ColHead>
                ))}
              </HeaderRow>
              {rows.map((r) => (
                <Row key={r}>
                  <RowHead $sel={r === 24}>{r}</RowHead>
                  {cols.map((c, i) => {
                    const v = cellValue(c, r);
                    return (
                      <Cell key={c} $num={v?.num} $w={i === 15 ? 17 : 82}>{v?.t}</Cell>
                    );
                  })}
                </Row>
              ))}
              <ChartBox $x={698} $y={39} $w={584} $h={338}><LineChart /></ChartBox>
              <ChartBox $x={83} $y={243} $w={581} $h={336}><AreaChart /></ChartBox>
              <Selected><Handle /></Selected>
            </Sheet>
            <VScroll>
              <SplitDash />
              <VBtn><TriU /></VBtn>
              <ThumbV><GripV /></ThumbV>
              <Spacer />
              <VBtn $down><TriD /></VBtn>
            </VScroll>
          </SheetArea>
          <TabBar>
            <NavBtn>|</NavBtn><NavBtn>‹</NavBtn><NavBtn>›</NavBtn><NavBtn>|</NavBtn>
            <TabShape>
              <I w={48} h={13}><path d="M0 0l7 13h36l5-13" fill="#f7f6f5" stroke="#8e8e8e" /></I>
              <TabLabel>Sheet1</TabLabel>
            </TabShape>
            <I w={24} h={13}><path d="M5 0h18l-5 13H0z" fill="#e2e1df" stroke="#9a9a98" /><path d="M10 3h4v2.500h2.500v3H14V11h-4V8.500H7.500v-3H10z" fill="#8ac43c" stroke="#4c8a1a" strokeWidth=".6" /></I>
            <Splitter />
            <HBtn $w={10} $ml={3}><TriL /></HBtn>
            <ThumbH><GripH /></ThumbH>
            <TrackH />
            <HBtn $right $w={15}><TriR /></HBtn>
            <EndTick />
          </TabBar>
          <StatusBar>
            <StatusCell $w={328} $first>&nbsp;Sheet 1 / 1</StatusCell>
            <StatusCell $w={375}>Default</StatusCell>
            <StatusCell $w={30} $center><I w={14} h={10}><rect x="1" y="2" width="8" height="6" fill="#8d8b87" /><path d="M11 1h2M12 1v8M11 9h2" stroke="#555" /></I></StatusCell>
            <StatusCell $w={29} $center><I w={12} h={13}><rect x=".500" y=".500" width="10" height="12" fill="#f4f4f2" stroke="#aaa" /><path d="M3 6l2 3 3-5" stroke="#999" fill="none" /></I></StatusCell>
            <StatusCell $w={28} />
            <StatusCell $w={320} $center>CountA=0</StatusCell>
            <StatusCell $w={144} $center>
              <ZoomSign>−</ZoomSign>
              <ZoomTrack><ZoomKnob /></ZoomTrack>
              <ZoomSign>+</ZoomSign>
            </StatusCell>
            <StatusCell $w={47} $center>100%</StatusCell>
          </StatusBar>
        </Main>
      </Body>
    </Page>
  );
}
